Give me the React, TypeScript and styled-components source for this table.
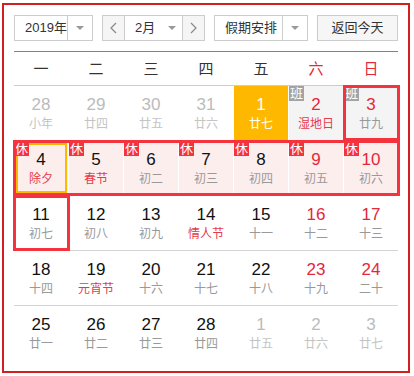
import React from 'react';
import styled, { createGlobalStyle } from 'styled-components';

const GlobalStyle = createGlobalStyle`
  html, body {
    margin: 0;
    padding: 0;
    background: #ffffff;
  }
  body {
    font-family: "Liberation Sans", "Noto Sans CJK SC", sans-serif;
  }
`;

const Page = styled.div`
  padding: 3px 0 0 2px;
`;

const Calendar = styled.div`
  width: 408px;
  box-sizing: border-box;
  border: 2px solid #d21f1f;
  padding: 10px;
  background: #ffffff;
`;

const Toolbar = styled.div`
  display: flex;
  justify-content: space-between;
  align-items: center;
  padding-bottom: 10px;
  border-bottom: 1px solid #ea5750;
`;

const Select = styled.div<{ $width: number }>`
  display: flex;
  width: ${p => p.$width}px;
  height: 26px;
  box-sizing: border-box;
  border: 1px solid #cccccc;
  background: #ffffff;
  font-size: 13px;
  color: #333333;
`;

const SelectText = styled.div`
  flex: 1;
  padding-left: 10px;
  line-height: 24px;
  white-space: nowrap;
`;

const ArrowCell = styled.div`
  width: 24px;
  display: flex;
  align-items: center;
  justify-content: center;
  border-left: 1px solid #cccccc;
`;

const Triangle = styled.span`
  width: 0;
  height: 0;
  border-left: 4px solid transparent;
  border-right: 4px solid transparent;
  border-top: 4px solid #999999;
`;

const MonthGroup = styled.div`
  display: flex;
  width: 103px;
  height: 26px;
  box-sizing: border-box;
  border: 1px solid #cccccc;
  font-size: 13px;
  color: #333333;
`;

const StepButton = styled.div<{ $side: 'left' | 'right' }>`
  width: 21px;
  display: flex;
  align-items: center;
  justify-content: center;
  background: #f5f5f5;
  ${p => (p.$side === 'left' ? 'border-right' : 'border-left')}: 1px solid #cccccc;
`;

const MonthText = styled.div`
  flex: 1;
  display: flex;
  align-items: center;
  padding-left: 10px;
  line-height: 24px;
`;

const MonthLabel = styled.span`
  flex: 1;
`;

const MonthArrow = styled.span`
  width: 20px;
  display: flex;
  justify-content: center;
`;

const TodayButton = styled.div`
  width: 81px;
  height: 26px;
  box-sizing: border-box;
  border: 1px solid #cccccc;
  background: #f6f6f6;
  font-size: 13px;
  color: #333333;
  line-height: 24px;
  text-align: center;
`;

const Grid = styled.div`
  display: grid;
  grid-template-columns: repeat(7, 1fr);
  column-gap: 1px;
`;

const WeekHead = styled(Grid)`
  height: 34px;
  border-bottom: 1px solid #cccccc;
  box-sizing: border-box;
`;

const WeekName = styled.div<{ $weekend: boolean }>`
  text-align: center;
  line-height: 33px;
  font-size: 15px;
  color: ${p => (p.$weekend ? '#e4283a' : '#333333')};
`;

const WeekRow = styled(Grid)<{ $last: boolean }>`
  height: 55px;
  box-sizing: border-box;
  border-bottom: ${p => (p.$last ? 'none' : '1px solid #d4d4d4')};
`;

type Kind = 'normal' | 'other' | 'today' | 'work' | 'rest';

const cellBg: Record<Kind, string> = {
  normal: '#ffffff',
  other: '#ffffff',
  today: '#ffb800',
  work: '#f4f4f4',
  rest: '#fdeeee',
};

const Cell = styled.div<{ $col: number; $kind: Kind; $selected: boolean }>`
  grid-row: 1;
  grid-column: ${p => p.$col};
  position: relative;
  box-sizing: border-box;
  background: ${p => cellBg[p.$kind]};
  padding-top: 8px;
  text-align: center;

  &::after {
    content: '';
    display: ${p => (p.$selected ? 'block' : 'none')};
    position: absolute;
    inset: 2px 1px 2px 2px;
    border: 2px solid #ffb800;
  }
`;

const DayNum = styled.div<{ $color: string }>`
  font-size: 17px;
  line-height: 22px;
  color: ${p => p.$color};
`;

const Lunar = styled.div<{ $color: string }>`
  font-size: 12px;
  line-height: 16px;
  color: ${p => p.$color};
`;

const Badge = styled.span<{ $rest: boolean }>`
  position: absolute;
  top: 0;
  left: 0;
  z-index: 1;
  width: 15px;
  height: 15px;
  line-height: 15px;
  font-size: 13px;
  text-align: center;
  color: #ffffff;
  background: ${p => (p.$rest ? '#f5333f' : '#a3a3a3')};
`;

const Highlight = styled.div<{ $from: number; $to: number }>`
  grid-row: 1;
  grid-column: ${p => p.$from} / ${p => p.$to + 1};
  margin: -1px -2px -1px -1px;
  border: 3px solid #f5333f;
  z-index: 2;
  pointer-events: none;
`;

type Day = {
  n: number;
  lunar: string;
  kind?: Kind;
  festival?: boolean;
  selected?: boolean;
};

const weeks: { days: Day[]; mark?: [number, number] }[] = [
  {
    days: [
      { n: 28, lunar: '小年', kind: 'other' },
      { n: 29, lunar: '廿四', kind: 'other' },
      { n: 30, lunar: '廿五', kind: 'other' },
      { n: 31, lunar: '廿六', kind: 'other' },
      { n: 1, lunar: '廿七', kind: 'today' },
      { n: 2, lunar: '湿地日', kind: 'work', festival: true },
      { n: 3, lunar: '廿九', kind: 'work' },
    ],
    mark: [7, 7],
  },
  {
    days: [
      { n: 4, lunar: '除夕', kind: 'rest', festival: true, selected: true },
      { n: 5, lunar: '春节', kind: 'rest', festival: true },
      { n: 6, lunar: '初二', kind: 'rest' },
      { n: 7, lunar: '初三', kind: 'rest' },
      { n: 8, lunar: '初四', kind: 'rest' },
      { n: 9, lunar: '初五', kind: 'rest' },
      { n: 10, lunar: '初六', kind: 'rest' },
    ],
    mark: [1, 7],
  },
  {
    days: [
      { n: 11, lunar: '初七' },
      { n: 12, lunar: '初八' },
      { n: 13, lunar: '初九' },
      { n: 14, lunar: '情人节', festival: true },
      { n: 15, lunar: '十一' },
      { n: 16, lunar: '十二' },
      { n: 17, lunar: '十三' },
    ],
    mark: [1, 1],
  },
  {
    days: [
      { n: 18, lunar: '十四' },
      { n: 19, lunar: '元宵节', festival: true },
      { n: 20, lunar: '十六' },
      { n: 21, lunar: '十七' },
      { n: 22, lunar: '十八' },
      { n: 23, lunar: '十九' },
      { n: 24, lunar: '二十' },
    ],
  },
  {
    days: [
      { n: 25, lunar: '廿一' },
      { n: 26, lunar: '廿二' },
      { n: 27, lunar: '廿三' },
      { n: 28, lunar: '廿四' },
      { n: 1, lunar: '廿五', kind: 'other' },
      { n: 2, lunar: '廿六', kind: 'other' },
      { n: 3, lunar: '廿七', kind: 'other' },
    ],
  },
];

const weekNames = ['一', '二', '三', '四', '五', '六', '日'];

const Chevron: React.FC<{ dir: 'left' | 'right' }> = ({ dir }) => (
  <svg width="7" height="12" viewBox="0 0 7 12">
    <polyline
      points={dir === 'left' ? '6,1 1,6 6,11' : '1,1 6,6 1,11'}
      fill="none"
      stroke="#888888"
      strokeWidth="1.2"
    />
  </svg>
);

function numColor(d: Day, col: number): string {
  const kind = d.kind ?? 'normal';
  if (kind === 'other') return '#bbbbbb';
  if (kind === 'today') return '#ffffff';
  return col >= 6 ? '#e4283a' : '#111111';
}

function lunarColor(d: Day): string {
  const kind = d.kind ?? 'normal';
  if (kind === 'other') return '#c4c4c4';
  if (kind === 'today') return '#ffffff';
  if (d.festival) return '#e83a4c';
  return '#999999';
}

const App: React.FC = () => {
  return (
    <Page>
      <GlobalStyle />
      <Calendar>
        <Toolbar>
          <Select $width={79}>
            <SelectText>2019年</SelectText>
            <ArrowCell>
              <Triangle />
            </ArrowCell>
          </Select>
          <MonthGroup>
            <StepButton $side="left">
              <Chevron dir="left" />
            </StepButton>
            <MonthText>
              <MonthLabel>2月</MonthLabel>
              <MonthArrow>
                <Triangle />
              </MonthArrow>
            </MonthText>
            <StepButton $side="right">
              <Chevron dir="right" />
            </StepButton>
          </MonthGroup>
          <Select $width={94}>
            <SelectText>假期安排</SelectText>
            <ArrowCell>
              <Triangle />
            </ArrowCell>
          </Select>
          <TodayButton>返回今天</TodayButton>
        </Toolbar>

        <WeekHead>
          {weekNames.map((w, i) => (
            <WeekName key={w} $weekend={i >= 5}>
              {w}
            </WeekName>
          ))}
        </WeekHead>

        {weeks.map((week, wi) => (
          <WeekRow key={wi} $last={wi === weeks.length - 1}>
            {week.days.map((d, i) => {
              const kind = d.kind ?? 'normal';
              return (
                <Cell key={i} $col={i + 1} $kind={kind} $selected={!!d.selected}>
                  {kind === 'work' && <Badge $rest={false}>班</Badge>}
                  {kind === 'rest' && <Badge $rest>休</Badge>}
                  <DayNum $color={numColor(d, i + 1)}>{d.n}</DayNum>
                  <Lunar $color={lunarColor(d)}>{d.lunar}</Lunar>
                </Cell>
              );
            })}
            {week.mark && <Highlight $from={week.mark[0]} $to={week.mark[1]} />}
          </WeekRow>
        ))}
      </Calendar>
    </Page>
  );
};

export default App;
